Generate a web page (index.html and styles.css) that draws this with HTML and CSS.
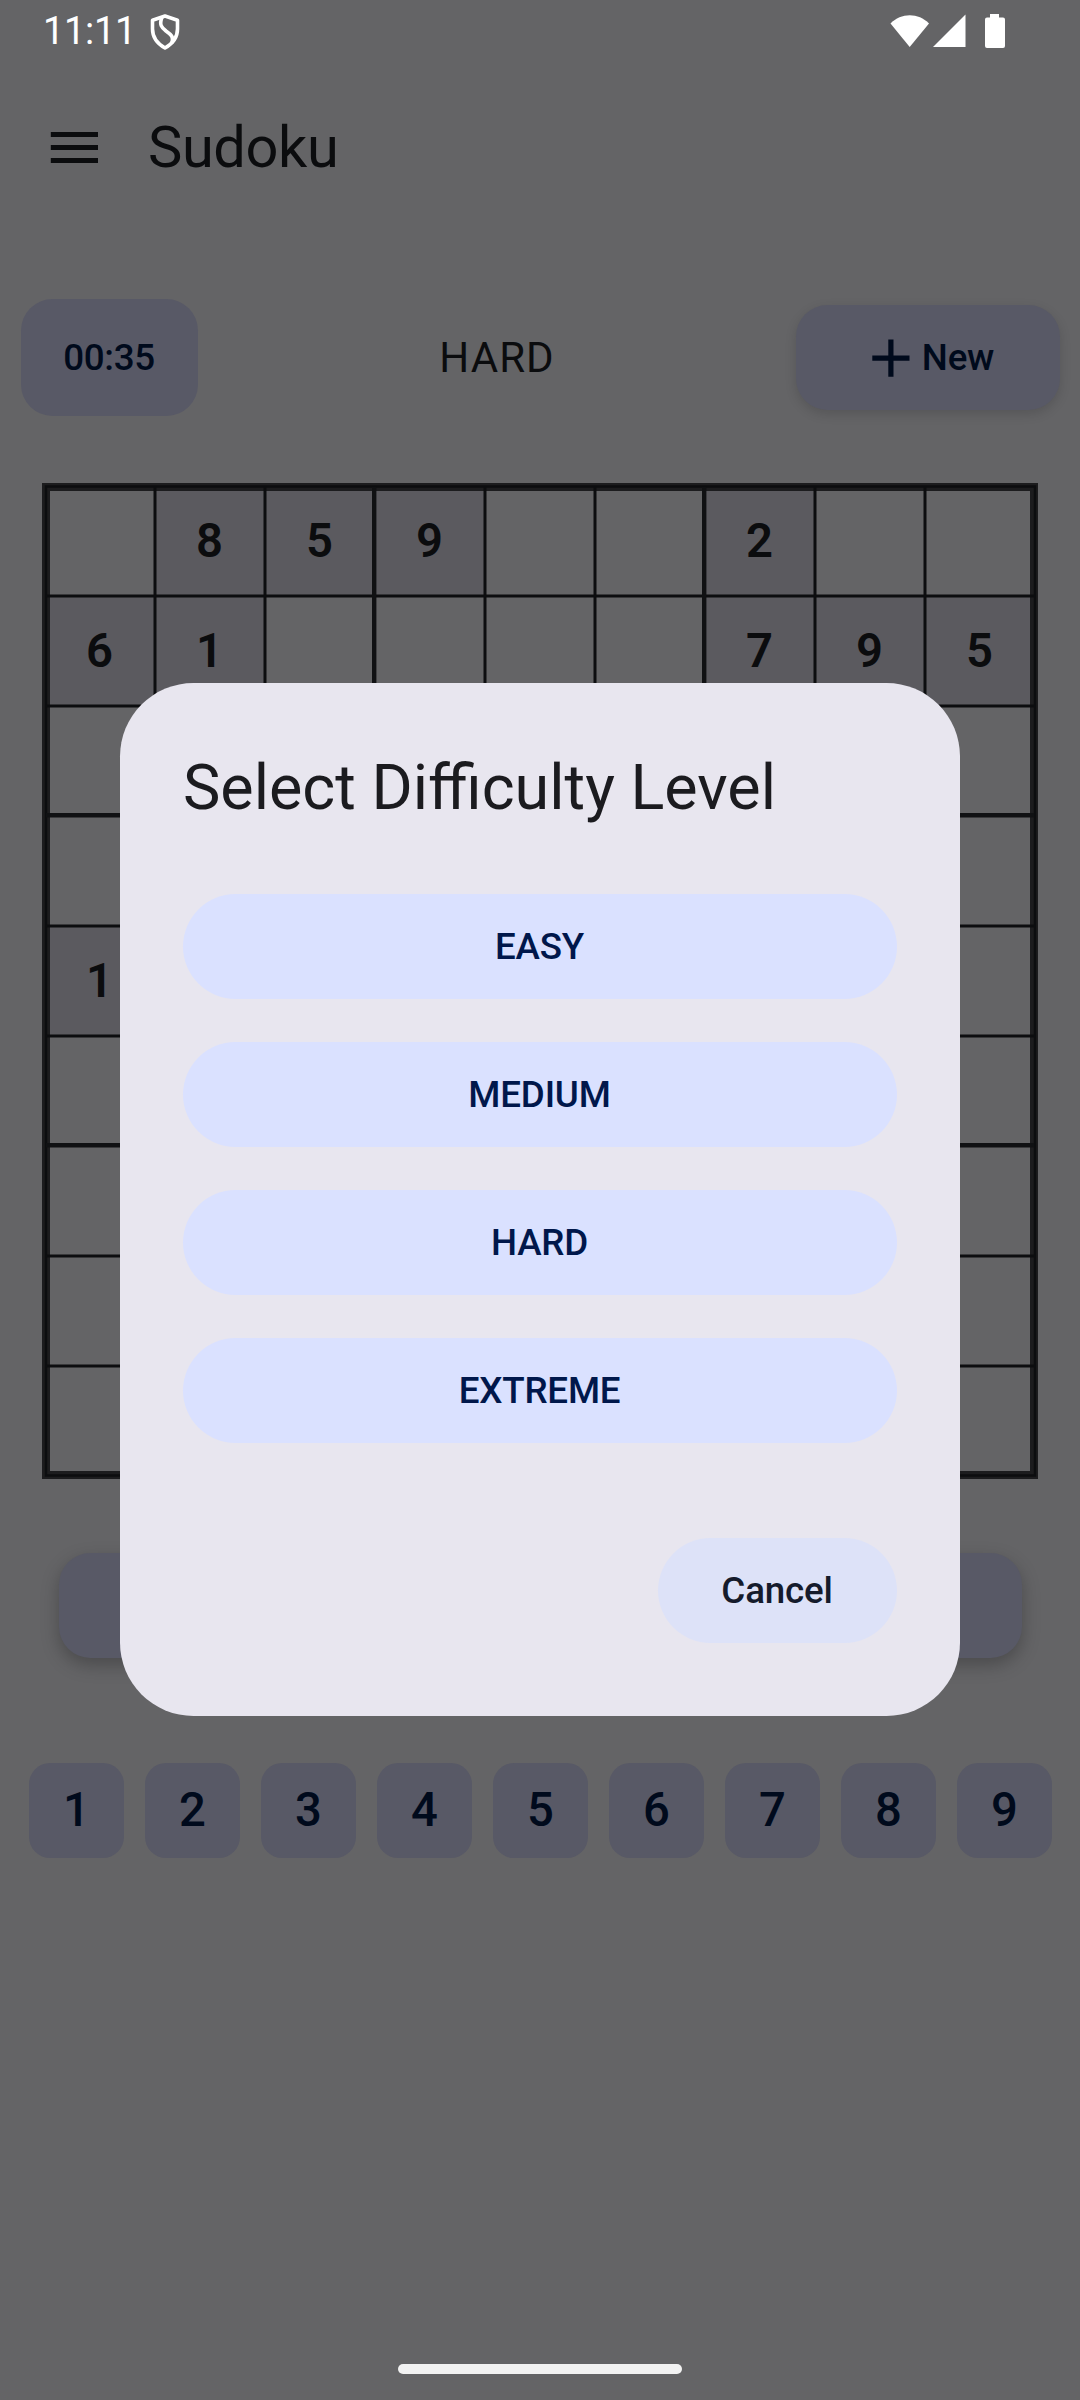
FILE: index.html
```html
<!DOCTYPE html>
<html lang="en">
<head>
<meta charset="utf-8">
<title>Sudoku</title>
<link rel="stylesheet" href="styles.css">
</head>
<body>
<div class="screen">
  <header class="status">
    <span class="clock">11:11</span>
    <svg class="shield" width="32" height="38" viewBox="0 0 32 38" fill="none" stroke="#fff" stroke-width="3.6" stroke-linejoin="round">
      <path d="M16 3 L28.500 7.200 V16 C28.500 25 23 31 16 35 C9 31 3.500 25 3.500 16 V7.200 Z"/>
      <path d="M13 4 C10 12 12.500 14.500 17 18 C22 21.500 25 24 23 30"/>
    </svg>
    <svg class="signals" width="116" height="36" viewBox="0 0 116 36" fill="#fff">
      <path d="M0.500 9.500 C11 -1.500 28.500 -1.500 39 9.500 L19.700 33 Z"/>
      <path d="M75.500 0.500 V33 H43 Z"/>
      <path d="M100 0 H109 V3.500 H113 Q115 3.500 115 5.500 V32 Q115 34 113 34 H97 Q95 34 95 32 V5.500 Q95 3.500 97 3.500 H100 Z"/>
    </svg>
  </header>
  <div class="appbar">
    <svg class="menu" width="48" height="32" viewBox="0 0 48 32" fill="#0b0c0e"><path d="M0.800 0h47.500v5H0.800zM0.800 13h47.500v5H0.800zM0.800 26h47.500v5H0.800z"/></svg>
    <h1 class="apptitle">Sudoku</h1>
  </div>
  <div class="controls">
    <div class="timer">00:35</div>
    <div class="level">HARD</div>
    <div class="new"><svg width="38" height="38" viewBox="0 0 38 38" fill="#000a1c"><path d="M16.300 0.500h5.200v16h16v5.200h-16v16h-5.200v-16h-16v-5.200h16z"/></svg><span>New</span></div>
  </div>
  <div class="board">
    <div class="cells">
      <i></i><i class="g">8</i><i class="g">5</i><i class="g">9</i><i></i><i></i><i class="g">2</i><i></i><i></i>
      <i class="g">6</i><i class="g">1</i><i></i><i></i><i></i><i></i><i class="g">7</i><i class="g">9</i><i class="g">5</i>
      <i></i><i></i><i></i><i></i><i></i><i></i><i></i><i></i><i></i>
      <i></i><i></i><i></i><i></i><i></i><i></i><i></i><i></i><i></i>
      <i class="g">1</i><i></i><i></i><i></i><i></i><i></i><i></i><i></i><i></i>
      <i></i><i></i><i></i><i></i><i></i><i></i><i></i><i></i><i></i>
      <i></i><i></i><i></i><i></i><i></i><i></i><i></i><i></i><i></i>
      <i></i><i></i><i></i><i></i><i></i><i></i><i></i><i></i><i></i>
      <i></i><i></i><i></i><i></i><i></i><i></i><i></i><i></i><i></i>
    </div>
    <svg class="lines" width="996" height="996" viewBox="0 0 996 996" fill="none">
      <rect x="4" y="4" width="988" height="988" stroke="#1c1c1e" stroke-width="8"/>
      <rect x="4" y="3.500" width="989" height="989" stroke="#0c0d0f" stroke-width="2.500"/>
      <g stroke="#0c0d0f" stroke-width="3">
        <path d="M113 4V992M223 4V992M443 4V992M553 4V992M773 4V992M883 4V992"/>
        <path d="M4 113H992M4 223H992M4 443H992M4 553H992M4 773H992M4 883H992"/>
      </g>
      <path stroke="#101113" stroke-width="4.400" d="M332.200 4V992M662.200 4V992M4 332.200H992M4 662.200H992"/>
    </svg>
  </div>
  <div class="undo"></div>
  <div class="keypad"><b>1</b><b>2</b><b>3</b><b>4</b><b>5</b><b>6</b><b>7</b><b>8</b><b>9</b></div>
  <div class="navbar"></div>
  <section class="dialog">
    <h2 class="heading">Select Difficulty Level</h2>
    <div class="choices">
      <div class="choice">EASY</div>
      <div class="choice">MEDIUM</div>
      <div class="choice">HARD</div>
      <div class="choice">EXTREME</div>
    </div>
    <div class="cancel">Cancel</div>
  </section>
</div>
</body>
</html>
```
FILE: styles.css
```css
* { box-sizing: border-box; }
body { margin: 0; }
.screen {
  position: relative;
  width: 1080px;
  height: 2400px;
  display: flex;
  flex-direction: column;
  overflow: hidden;
  background: #646466;
  color: #0b0c0e;
  font-family: Roboto, sans-serif;
}
.status { display: flex; height: 63px; padding: 14px 74px 0 43px; align-items: flex-start; color: #fff; }
.clock { width: 94px; font-size: 38px; line-height: 35px; letter-spacing: -0.3px; }
.shield { margin: -1px 0 0 12px; }
.signals { margin-left: auto; }
.appbar { display: flex; align-items: center; height: 168px; padding: 0 0 0 50px; }
.menu { margin-top: 1px; }
.apptitle { margin: 0 0 0 50px; font-size: 57.75px; font-weight: 400; line-height: 70px; letter-spacing: -0.4px; }
.controls { display: flex; align-items: center; justify-content: space-between; height: 117px; margin: 68px 20px 67px 21px; }
.timer { width: 177px; height: 117px; padding-right: 1px; line-height: 117px; text-align: center; border-radius: 31.5px; background: #585966; color: #000a1c; font-size: 36.75px; font-weight: 500; letter-spacing: -0.3px; }
.level { font-size: 42px; letter-spacing: 1.1px; }
.new { display: flex; align-items: center; justify-content: center; gap: 12px; width: 264px; height: 105px; padding-left: 10px; border-radius: 31.5px; background: #585966; color: #000a1c; font-size: 36.75px; font-weight: 500; letter-spacing: -0.2px; box-shadow: 0 4px 12px rgba(0,0,0,.14); }
.board { position: relative; width: 996px; height: 996px; margin: 0 42px; padding: 3px; }
.cells { display: grid; grid-template: repeat(9, 110px) / repeat(9, 110px); }
.cells i { display: flex; align-items: center; justify-content: center; padding: 0 1px 0 0; font-style: normal; font-size: 47.25px; font-weight: 600; }
.cells .g { background: #5b5a5f; }
.lines { position: absolute; left: 0; top: 0; }
.undo { width: 963px; height: 105px; margin: 74px 0 0 59px; border-radius: 31.5px; background: #585966; box-shadow: 0 7px 18px rgba(0,0,0,.26); }
.keypad { display: flex; gap: 21px; margin: 105px 20px 0 29px; }
.keypad b { width: 95px; height: 95px; line-height: 95px; text-align: center; border-radius: 21px; background: #585966; color: #000a1c; font-size: 47.25px; font-weight: 500; }
.navbar { width: 284px; height: 10px; margin: auto auto 26px; border-radius: 5px; background: #f2f2f2; }
.dialog { position: absolute; left: 120px; top: 683px; width: 840px; height: 1033px; padding: 63px; border-radius: 73.5px; background: #e8e6ef; display: flex; flex-direction: column; }
.heading { margin: 0; font-size: 62.9px; font-weight: 400; line-height: 84px; color: #1b1b1f; }
.choices { display: flex; flex-direction: column; gap: 43px; margin-top: 64px; }
.choice, .cancel { height: 105px; padding-right: 1px; line-height: 106px; text-align: center; border-radius: 53px; font-size: 36.75px; font-weight: 500; letter-spacing: -0.2px; background: #dae1ff; color: #00174b; }
.cancel { width: 239px; margin: 95px 0 0 auto; background: #dde2f8; color: #151b2c; }
```
